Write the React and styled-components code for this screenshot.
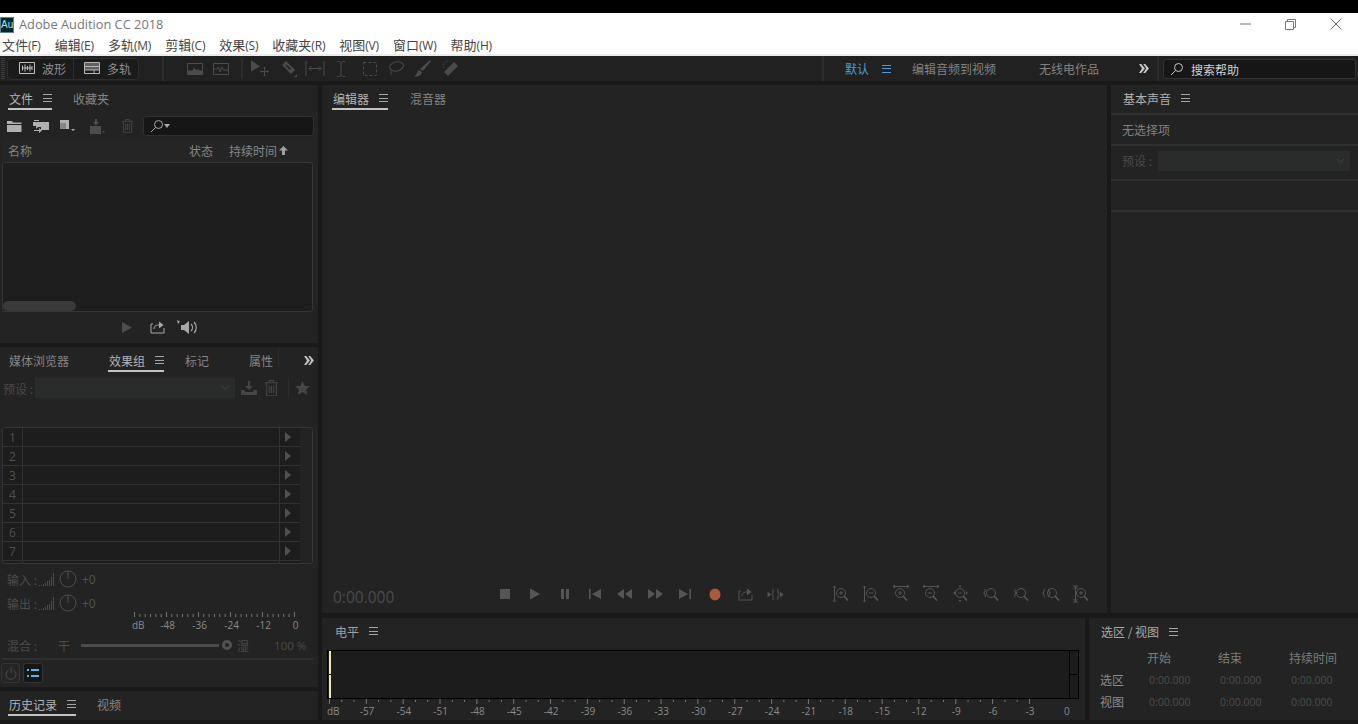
import React from 'react';
import styled, {createGlobalStyle} from 'styled-components';

const GlobalStyle = createGlobalStyle`
  html, body { margin: 0; padding: 0; background: #191919; }
  body {
    width: 1358px;
    height: 724px;
    overflow: hidden;
    font-family: "Noto Sans CJK SC", "Liberation Sans", sans-serif;
    font-size: 12px;
  }
  * { box-sizing: border-box; }
`;

const Shell = styled.div`
  width: 1358px;
  height: 724px;
  display: flex;
  flex-direction: column;
  background: #191919;
  overflow: hidden;
`;
const TopBlack = styled.div`height: 13px; background: #000;`;
const TitleBar = styled.div`
  height: 22px;
  background: #fff;
  display: flex;
  align-items: center;
`;
const AppLogo = styled.div`
  width: 14px;
  height: 16px;
  margin-top: 2px;
  background: #00262f;
  border: 1px solid #5f8290;
  color: #9ce8f5;
  font: 10px/14px "Liberation Sans", sans-serif;
  text-align: center;
`;
const AppTitle = styled.div`
  margin-left: 5px;
  color: #777;
  font: 12.8px "Open Sans", sans-serif;
`;
const WinButtons = styled.div`
  margin-left: auto;
  display: flex;
  color: #777;
`;
const WinButton = styled.div`
  width: 45px;
  height: 22px;
  display: flex;
  align-items: center;
  justify-content: center;
`;
const MenuBar = styled.div`
  height: 21px;
  background: #fff;
  display: flex;
  align-items: center;
  gap: 14px;
  padding-left: 2px;
  border-bottom: 2px solid #ececec;
`;
const MenuItem = styled.span`
  color: #444;
  font-size: 13px;
  line-height: 19px;
  white-space: nowrap;
  font-family: "Noto Sans CJK SC", sans-serif;
  span { font: 12px "Open Sans", sans-serif; letter-spacing: -0.2px; }
`;
const Toolbar = styled.div`
  height: 25px;
  background: #212121;
  display: flex;
  align-items: center;
  color: #4b4b4b;
`;
const Grip = styled.div`
  width: 4px;
  height: 21px;
  margin-left: 1px;
  background: repeating-linear-gradient(#3c3c3c 0 1px, transparent 1px 2px);
`;
const ModeGroup = styled.div`
  margin-left: 2px;
  width: 132px;
  height: 22px;
  display: flex;
  background: #1b1b1b;
  border: 1px solid #2e2e2e;
  border-radius: 4px;
`;
const ModeButton = styled.div`
  flex: 1;
  display: flex;
  align-items: center;
  gap: 7px;
  padding: 0 0 1px 11px;
  color: #8e8e8e;
  white-space: nowrap;
  & + & { border-left: 1px solid #2e2e2e; padding-left: 10px; }
`;
const ToolSep = styled.div`
  flex: none;
  width: ${p => p.$w || 2}px;
  height: ${p => p.$h || 25}px;
  margin-left: ${p => p.$ml || 0}px;
  background: #2c2c2c;
`;
const Tool = styled.svg`
  flex: none;
  margin-left: ${p => p.$ml || 0}px;
  fill: none;
  stroke: currentColor;
  stroke-width: 1;
  color: ${p => p.$c || 'inherit'};
`;
const FlatTool = styled(Tool)`
  stroke: none;
  fill: currentColor;
`;
const Slot = styled.span`
  display: flex;
  flex: none;
  margin-left: ${p => p.$ml || 0}px;
  color: ${p => p.$c || 'inherit'};
`;
const WorkspaceLink = styled.span`
  margin: 0 0 1px ${p => p.$ml}px;
  color: ${p => (p.$on ? '#4a9bd6' : '#818181')};
  white-space: nowrap;
`;
const HelpSearch = styled.div`
  margin-left: 4px;
  width: 193px;
  height: 20px;
  display: flex;
  align-items: center;
  gap: 7px;
  padding-left: 6px;
  background: #161616;
  border: 1px solid #333;
  border-radius: 3px;
  color: #d2d2d2;
  span { padding-top: 2px; }
`;

const Workspace = styled.div`
  margin-top: 4px;
  flex: 1;
  padding-bottom: 4px;
  display: grid;
  grid-template-columns: 318px 1fr;
  gap: 4px;
  min-height: 0;
`;
const Column = styled.div`
  display: flex;
  flex-direction: column;
  min-height: 0;
`;
const Row = styled.div`
  display: flex;
  gap: 4px;
  height: ${p => p.$h}px;
  flex: ${p => (p.$h ? 'none' : 1)};
  margin-top: ${p => p.$mt || 0}px;
`;
const Panel = styled.section`
  background: #232323;
  width: ${p => (p.$w ? p.$w + 'px' : 'auto')};
  height: ${p => (p.$h ? p.$h + 'px' : 'auto')};
  flex: ${p => (p.$w || p.$h ? 'none' : 1)};
  margin-top: ${p => p.$mt || 0}px;
  display: flex;
  flex-direction: column;
  overflow: hidden;
`;
const Tabs = styled.div`
  height: ${p => p.$h || 26}px;
  flex: none;
  display: flex;
  align-items: flex-start;
  padding-left: ${p => p.$pl ?? 8}px;
  position: relative;
`;
const TabItem = styled.div`
  display: flex;
  align-items: center;
  gap: 10px;
  height: 25px;
  padding: 1px 0 0 1px;
  width: ${p => (p.$w ? p.$w + 'px' : 'auto')};
  margin-left: ${p => p.$ml || 0}px;
  color: ${p => p.$c || (p.$on ? '#b4b4b4' : '#858585')};
  white-space: nowrap;
  box-shadow: ${p => (p.$on ? 'inset 0 -2px 0 0 #c4c4c4' : 'none')};
`;
const Burger = styled.span`
  width: 9px;
  height: 8px;
  flex: none;
  margin-left: ${p => p.$ml || 0}px;
  border-top: 1px solid ${p => p.$c || '#a5a5a5'};
  border-bottom: 1px solid ${p => p.$c || '#a5a5a5'};
  background: linear-gradient(${p => p.$c || '#a5a5a5'}, ${p => p.$c || '#a5a5a5'}) center / 100% 1px no-repeat;
`;
const IconBar = styled.div`
  height: 26px;
  flex: none;
  display: flex;
  align-items: center;
  color: #b0b0b0;
  margin-top: ${p => p.$mt || 0}px;
`;
const SearchBox = styled.div`
  width: 171px;
  height: 20px;
  margin-left: 10px;
  background: #161616;
  border: 1px solid #2f2f2f;
  border-radius: 3px;
  display: flex;
  align-items: center;
  padding-left: 6px;
  color: #a8a8a8;
`;
const ListHead = styled.div`
  height: 23px;
  margin: 0 5px 0 2px;
  display: grid;
  grid-template-columns: 181px 40px 1fr;
  align-items: center;
  color: #858585;
  background: #252525;
  span { padding-left: 6px; display: flex; align-items: center; gap: 2px; white-space: nowrap; }
`;
const FileList = styled.div`
  margin: 0 5px 0 2px;
  height: 150px;
  background: #1e1e1e;
  border: 1px solid #363636;
  border-radius: 3px;
  display: flex;
  align-items: flex-end;
`;
const HScroll = styled.div`
  width: 73px;
  height: 10px;
  background: #3a3a3a;
  border-radius: 5px;
`;
const PreviewBar = styled.div`
  flex: 1;
  display: flex;
  align-items: center;
  color: #a8a8a8;
`;
const PanelMore = styled.span`
  position: absolute;
  right: 4px;
  top: 9px;
  color: #c0c0c0;
  display: flex;
`;
const PresetRow = styled.div`
  height: 20px;
  margin-top: ${p => p.$mt}px;
  padding-left: ${p => p.$pl}px;
  display: flex;
  align-items: center;
  flex: none;
  color: #464646;
`;
const PresetLabel = styled.span`
  width: ${p => p.$w}px;
  color: #4a4a4a;
  white-space: nowrap;
`;
const DisabledSelect = styled.div`
  width: ${p => p.$w}px;
  height: 20px;
  background: #2a2b2b;
  display: flex;
  align-items: center;
  justify-content: flex-end;
  padding-right: 5px;
  color: #434343;
`;
const Rack = styled.div`
  margin: 29px 5px 0 2px;
  height: 137px;
  flex: none;
  border: 1px solid #353535;
  border-radius: 3px;
  overflow: hidden;
  padding-right: 12px;
`;
const RackRow = styled.div`
  height: 19px;
  display: grid;
  grid-template-columns: 19px 1fr 21px;
  background: #1d1d1d;
  border-bottom: 1px solid #323232;
  color: #505050;
  span { display: flex; align-items: center; justify-content: center; font: 12px "Open Sans", sans-serif; }
  span + span { border-left: 1px solid #323232; }
`;
const GainRow = styled.div`
  height: 24px;
  flex: none;
  margin-top: ${p => p.$mt || 0}px;
  padding-left: 7px;
  display: flex;
  align-items: center;
  color: #4c4c4c;
  b { font-weight: 400; font: 12px "Open Sans", sans-serif; margin-left: 5px; color: #505050; }
  span { width: 32px; white-space: nowrap; }
`;
const Ruler = styled.div`
  margin: ${p => p.$mt || 0}px 0 0 ${p => p.$ml}px;
  width: ${p => p.$w}px;
  flex: none;
`;
const RulerTicks = styled(Tool)`
  display: block;
  color: #777;
`;
const RulerLabels = styled.div`
  display: flex;
  color: #8a8a8a;
  font: 10px/14px "Open Sans", sans-serif;
  white-space: nowrap;
`;
const RulerLabel = styled.span`
  flex: 0 0 ${p => p.$w}px;
  margin-left: ${p => p.$ml || 0}px;
  text-align: ${p => p.$a || 'center'};
`;
const MixRow = styled.div`
  height: 18px;
  margin-top: 4px;
  flex: none;
  padding-left: 7px;
  display: flex;
  align-items: center;
  color: #4a4a4a;
  white-space: nowrap;
`;
const MixText = styled.span`
  margin-left: ${p => p.$ml}px;
`;
const MixPercent = styled(MixText)`
  font: 11.5px "Open Sans", sans-serif;
`;
const MixTrack = styled.div`
  margin-left: 11px;
  width: 138px;
  height: 3px;
  background: #4a4a4a;
`;
const MixKnob = styled.div`
  margin-left: 3px;
  width: 10px;
  height: 10px;
  border-radius: 50%;
  border: 3px solid #525252;
`;
const RackDivider = styled.div`
  height: 2px;
  margin: 4px 5px 0 2px;
  background: #303030;
  flex: none;
`;
const FooterButtons = styled.div`
  display: flex;
  gap: 3px;
  padding: 3px 0 0 1px;
  flex: none;
`;
const SquareButton = styled.div`
  width: ${p => p.$w}px;
  height: 20px;
  border: 1px solid #343434;
  border-radius: 3px;
  background: ${p => (p.$on ? '#161616' : '#252525')};
  color: ${p => (p.$on ? '#5fb3e3' : '#4a4a4a')};
  display: flex;
  align-items: center;
  justify-content: center;
`;
const EditorBody = styled.div`
  flex: 1;
`;
const TransportBar = styled.div`
  height: 30px;
  margin-bottom: 4px;
  flex: none;
  display: flex;
  align-items: center;
  color: #555;
  padding-left: 11px;
`;
const TimeCode = styled.div`
  width: 157px;
  padding-top: 6px;
  color: #4b4b4b;
  font: 15.5px "Open Sans", sans-serif;
`;
const TransportCell = styled.div`
  width: 30px;
  display: flex;
  justify-content: center;
  align-items: center;
  color: ${p => p.$c || 'inherit'};
  margin-left: ${p => p.$ml || 0}px;
`;
const SoundRow = styled.div`
  height: ${p => p.$h}px;
  flex: none;
  display: flex;
  align-items: center;
  padding: 0 0 ${p => p.$pb || 0}px 11px;
  border-top: 2px solid #2f2f2f;
  color: ${p => p.$c || '#808080'};
`;
const MeterBox = styled.div`
  margin: 6px 0 0 5px;
  width: 752px;
  height: 49px;
  flex: none;
  background: #1c1c1c;
  border: 1px solid #000;
  display: flex;
  justify-content: space-between;
`;
const MeterPeak = styled.div`
  margin-left: 1px;
  width: 2px;
  background: linear-gradient(#000, #000) 0 23px / 100% 1px no-repeat, #efe6b4;
`;
const MeterClip = styled.div`
  width: 9px;
  border-left: 1px solid #000;
  background: linear-gradient(#000, #000) 0 23px / 100% 1px no-repeat;
`;
const RangeTitle = styled.div`
  height: 26px;
  padding: 1px 0 0 12px;
  display: flex;
  align-items: center;
  gap: 10px;
  color: #a8a8a8;
  flex: none;
`;
const RangeGrid = styled.div`
  display: grid;
  grid-template-columns: 47px 71px 71px 1fr;
  grid-template-rows: 21px 22px 22px;
  padding: 3px 0 0 11px;
  align-items: center;
`;
const RangeHead = styled.span`color: #7c7c7c; white-space: nowrap;`;
const RangeLabel = styled.span`color: #8a8a8a;`;
const RangeValue = styled.span`
  color: #4c4c4c;
  font: 10.5px "Open Sans", sans-serif;
  padding: 1px 0 0 2px;
`;

const FolderIcon = () => (
  <FlatTool width="15" height="12" viewBox="0 0 15 12">
    <path d="M0 1h5l1 1.5h8.5V4H0zM0 5h14.5v7H0z" />
  </FlatTool>
);
const TrashIcon = ({size = 12, ml}) => (
  <Tool width={size} height={size * 1.25} viewBox="0 0 12 15" $ml={ml}>
    <path d="M0 2.5h12M4 2.5V.5h4v2M1.5 2.5v12h9v-12M4 5v7M6 5v7M8 5v7" />
  </Tool>
);
const SearchGlass = ({color}) => (
  <Tool width="14" height="14" viewBox="0 0 14 14" $c={color} strokeWidth="1.6">
    <circle cx="8.5" cy="5.5" r="4" />
    <path d="M5.5 8.5L1 13" />
  </Tool>
);
const Chevron = () => (
  <Tool width="9" height="6" viewBox="0 0 9 6" strokeWidth="1.4"><path d="M1 1l3.5 3.5L8 1" /></Tool>
);
const DoubleArrow = () => (
  <FlatTool width="10" height="9" viewBox="0 0 10 9">
    <path d="M0 0h2.200L6 4.500 2.200 9H0l3-4.500zM4.200 0h2L10 4.500 6.200 9h-2l3-4.500z" />
  </FlatTool>
);
const Knob = () => (
  <Tool width="18" height="18" viewBox="0 0 18 18" $ml={5} $c="#4e4e4e" strokeWidth="2">
    <circle cx="9" cy="9" r="8" /><path d="M9 1v8" />
  </Tool>
);
const LevelBars = () => (
  <Tool width="15" height="15" viewBox="0 0 15 15" $c="#4a4a4a">
    <path d="M.5 14v-1M2.5 14v-1M4.5 14v-2M6.5 14v-3M8.500 14v-5M10.500 14V8M12.500 14V5M14.500 14V1" />
  </Tool>
);

// transport glyphs, all drawn on a 16x14 box
const transportGlyphs = [
  <rect key="s" x="3" y="2" width="10" height="10" />,
  <path key="p" d="M3 1.500l10 5.500-10 5.500z" />,
  <path key="pa" d="M4 2h3v10H4zM9 2h3v10H9z" />,
  <path key="pr" d="M2 2h1.600v10H2zM14 2v10L5 7z" />,
  <path key="rw" d="M0 7l7-5v10zM8 7l7-5v10z" />,
  <path key="ff" d="M16 7L9 2v10zM8 7L1 2v10z" />,
  <path key="nx" d="M14 2h-1.600v10H14zM2 2v10l9-5z" />,
];
const ExportGlyph = () => (
  <Tool width="15" height="13" viewBox="0 0 15 13" strokeWidth="1.8">
    <path d="M3 3H1v9h13V7" />
    <path d="M4 8c0-3 2-4 6-4" />
    <path d="M9 .5L13.500 4 9 7.500z" fill="currentColor" stroke="none" />
  </Tool>
);
const SkipGlyph = () => (
  <Tool width="17" height="13" viewBox="0 0 17 13" strokeWidth="1.200">
    <path d="M7 1c-1 0-1 1-1 2v2L5 6.500l1 1v2.500c0 1 0 2 1 2M10 1c1 0 1 1 1 2v2l1 1.500-1 1v2.500c0 1 0 2-1 2" />
    <path d="M4 6.500L0.500 3.500v6zM16.500 6.500L13 3.500v6z" fill="currentColor" stroke="none" />
  </Tool>
);
const ZoomGlyph = ({children, mark = 'plus', ox = 8}) => (
  <Tool width="20" height="20" viewBox="0 0 20 20">
    {children}
    <circle cx={ox + 3} cy="9" r="4.500" />
    <path d={`M${ox + 6} 12l4 4.500`} strokeWidth="1.800" />
    {mark === 'minus' && <path d={`M${ox + 1} 9h4`} />}
    {mark === 'plus' && <path d={`M${ox + 1} 9h4M${ox + 3} 7v4`} />}
  </Tool>
);
const zoomTools = [
  <ZoomGlyph key="0" ox={6}><path d="M2.500 2v16M1 3.500L2.500 2 4 3.500M1 16.500L2.500 18 4 16.500" /></ZoomGlyph>,
  <ZoomGlyph key="1" ox={6} mark="minus"><path d="M2.500 2v16M1 3.500L2.500 2 4 3.500M1 16.500L2.500 18 4 16.500" /></ZoomGlyph>,
  <ZoomGlyph key="2" ox={5}><path d="M1 2.500h16M3 1L1 2.500 3 4M15 1l2 1.500L15 4" /></ZoomGlyph>,
  <ZoomGlyph key="3" ox={5} mark="minus"><path d="M1 2.500h16M3 1L1 2.500 3 4M15 1l2 1.500L15 4" /></ZoomGlyph>,
  <ZoomGlyph key="4" ox={5} mark="minus"><path d="M8 1L6.500 3h3zM8 18l-1.500-2h3zM1 9l2-1.500v3zM16 9l-2-1.500v3z" fill="currentColor" stroke="none" /></ZoomGlyph>,
  <ZoomGlyph key="5" ox={6} mark="none"><path d="M4 5C3 5 3 6 3 7v1L1.500 9 3 10v1c0 1 0 2 1 2" /></ZoomGlyph>,
  <ZoomGlyph key="6" ox={6} mark="none"><path d="M2 5c1 0 1 1 1 2v1l1.500 1L3 10v1c0 1 0 2-1 2" /></ZoomGlyph>,
  <ZoomGlyph key="7" ox={7} mark="none"><path d="M3 5C2 5 2 6 2 7v1L.500 9 2 10v1c0 1 0 2 1 2M6 5c1 0 1 1 1 2v1l1.500 1L7 10v1c0 1 0 2-1 2" /></ZoomGlyph>,
  <ZoomGlyph key="8" ox={6}><path d="M1 2h5M1 18h5M3.500 2v16M1.500 5l2-2 2 2M1.500 15l2 2 2-2" /></ZoomGlyph>,
];

const menus = [['文件', 'F'], ['编辑', 'E'], ['多轨', 'M'], ['剪辑', 'C'], ['效果', 'S'], ['收藏夹', 'R'], ['视图', 'V'], ['窗口', 'W'], ['帮助', 'H']];
const levelLabels = ['-57', '-54', '-51', '-48', '-45', '-42', '-39', '-36', '-33', '-30', '-27', '-24', '-21', '-18', '-15', '-12', '-9', '-6', '-3', '0'];

const rackTicks = Array.from({length: 31}, (_, i) => i);
const levelTicks = Array.from({length: 58}, (_, i) => i);

const App = () => (
  <Shell>
    <GlobalStyle />
    <TopBlack />
    <TitleBar>
      <AppLogo>Au</AppLogo>
      <AppTitle>Adobe Audition CC 2018</AppTitle>
      <WinButtons>
        <WinButton><Tool width="11" height="2" viewBox="0 0 11 2"><path d="M0 1h11" /></Tool></WinButton>
        <WinButton><Tool width="11" height="11" viewBox="0 0 11 11"><path d="M.5 2.500h8v8h-8zM2.500 2.500v-2h8v8h-2" /></Tool></WinButton>
        <WinButton><Tool width="12" height="12" viewBox="0 0 12 12"><path d="M.5.5l11 11M11.500.5l-11 11" /></Tool></WinButton>
      </WinButtons>
    </TitleBar>
    <MenuBar>
      {menus.map(([name, key]) => (
        <MenuItem key={key}>{name}<span>({key})</span></MenuItem>
      ))}
    </MenuBar>

    <Toolbar>
      <Grip />
      <ModeGroup>
        <ModeButton>
          <Tool width="16" height="12" viewBox="0 0 16 12" $c="#c0c0c0">
            <path d="M.5.500h15v11H.5zM3 6h10M3.500 3.500v5M6 2.500v7M8.500 4v4M11 2.500v7M13 4v4" />
          </Tool>
          波形
        </ModeButton>
        <ModeButton>
          <Tool width="16" height="12" viewBox="0 0 16 12" $c="#b5b5b5">
            <path d="M.5.500h15v11H.5zM.5 4.500h15M.5 8h15M10 8v3.500" />
            <path d="M1 1h14v3.500H1zM1 5h14v3H1z" fill="currentColor" fillOpacity=".45" stroke="none" />
          </Tool>
          多轨
        </ModeButton>
      </ModeGroup>
      <ToolSep $ml={23} />
      <Tool width="16" height="12" viewBox="0 0 16 12" $ml={23}>
        <path d="M.5.500h15v11H.5z" />
        <path d="M1 11V8l2-1 1 1 2-1 1-3 1 2 2 1 1-1 1 1 3 1v3z" fill="currentColor" stroke="none" />
      </Tool>
      <Tool width="16" height="12" viewBox="0 0 16 12" $ml={10}>
        <path d="M.5.500h15v11H.5zM1 6h3l1.500-2L7 9l2-5 1.500 3H15" />
      </Tool>
      <ToolSep $ml={12} $h={21} />
      <Tool width="19" height="17" viewBox="0 0 19 17" $ml={8}>
        <path d="M0 0l9 6.500-9 5z" fill="currentColor" stroke="none" />
        <path d="M13.500 7v9M9.500 11.500h8M12.500 8l1-1 1 1M12.500 15l1 1 1-1M10.500 10.500l-1 1 1 1M16.500 10.500l1 1-1 1" />
      </Tool>
      <Tool width="17" height="16" viewBox="0 0 17 16" $ml={11}>
        <path d="M5 0l9 9-4 4-9-9z" fill="currentColor" stroke="none" />
        <path d="M5 4l4.500 4.500" stroke="#212121" strokeWidth="1.600" />
        <path d="M16 13v3h-3z" fill="currentColor" stroke="none" />
      </Tool>
      <Tool width="20" height="15" viewBox="0 0 20 15" $ml={7} strokeWidth="1.400">
        <path d="M1 0v15M19 0v15M4 7.500h12M6.500 5L4 7.500 6.500 10M13.500 5L16 7.500 13.500 10" />
      </Tool>
      <Tool width="10" height="16" viewBox="0 0 10 16" $ml={11}>
        <path d="M1 .5c2 0 4 0 4 2v11c0 2-2 2-4 2M9 .5c-2 0-4 0-4 2M9 15.500c-2 0-4 0-4-2" />
      </Tool>
      <Tool width="14" height="14" viewBox="0 0 14 14" $ml={17} strokeDasharray="3 2">
        <path d="M.5.500h13v13H.5z" />
      </Tool>
      <Tool width="16" height="15" viewBox="0 0 16 15" $ml={11} strokeWidth="1.200">
        <ellipse cx="8.500" cy="5.500" rx="7" ry="4.500" transform="rotate(-12 8.500 5.500)" />
        <path d="M4 9c-2 1-1 3 0 5" />
      </Tool>
      <FlatTool width="17" height="17" viewBox="0 0 17 17" $ml={10}>
        <path d="M16 0l1 1-8 10-3-2zM5 10l3 2.500C7 16 3 17 0 16.500 3 15 3 11 5 10z" />
      </FlatTool>
      <Tool width="18" height="17" viewBox="0 0 18 17" $ml={10}>
        <path d="M13 2l4 4-10 10-4-4z" fill="currentColor" stroke="none" />
        <path d="M3 8C1 5 3 1 7 1" strokeDasharray="1.500 1.500" />
      </Tool>

      <ToolSep $ml={363} />
      <WorkspaceLink $ml={21} $on>默认</WorkspaceLink>
      <Burger $ml={13} $c="#4a9bd6" />
      <WorkspaceLink $ml={21}>编辑音频到视频</WorkspaceLink>
      <WorkspaceLink $ml={43}>无线电作品</WorkspaceLink>
      <Slot $ml={40} $c="#c8c8c8"><DoubleArrow /></Slot>
      <ToolSep $ml={8} />
      <HelpSearch><SearchGlass color="#c8c8c8" /><span>搜索帮助</span></HelpSearch>
    </Toolbar>

    <Workspace>
      <Column>
        <Panel $h={258}>
          <Tabs>
            <TabItem $on>文件<Burger /></TabItem>
            <TabItem $ml={20}>收藏夹</TabItem>
          </Tabs>
          <IconBar $mt={2}>
            <Slot $ml={7}><FolderIcon /></Slot>
            <FlatTool width="16" height="13" viewBox="0 0 16 13" $ml={11}>
              <path d="M1 0h5v1H1zM0 2h16v8H8V7H5L3 9V6H0z" />
              <path d="M1 10h5V8l3 2.500L6 13v-2H1z" />
            </FlatTool>
            <FlatTool width="15" height="12" viewBox="0 0 15 12" $ml={11}>
              <path d="M0 0h9v9H6V3H0zM11 9h4l-2 2z" />
              <path d="M0 3h6v6H0z" fillOpacity=".7" />
            </FlatTool>
            <FlatTool width="16" height="15" viewBox="0 0 16 15" $ml={14} $c="#4d4d4d">
              <path d="M1 7h11v8H1zM6 0h2v3h2L7 6.500 4 3h2zM13 12h3l-1.500 2z" />
            </FlatTool>
            <Slot $c="#454545"><TrashIcon size={11} ml={17} /></Slot>
            <SearchBox>
              <SearchGlass />
              <FlatTool width="6" height="4" viewBox="0 0 6 4"><path d="M0 0h6L3 4z" /></FlatTool>
            </SearchBox>
          </IconBar>
          <ListHead>
            <span>名称</span>
            <span>状态</span>
            <span>持续时间
              <FlatTool width="9" height="9" viewBox="0 0 9 9" $c="#a0a0a0"><path d="M4.500 0L9 4.500H6V9H3V4.500H0z" /></FlatTool>
            </span>
          </ListHead>
          <FileList><HScroll /></FileList>
          <PreviewBar>
            <FlatTool width="10" height="11" viewBox="0 0 10 11" $ml={122} $c="#4d4d4d"><path d="M0 0l10 5.500L0 11z" /></FlatTool>
            <Slot $ml={18}><ExportGlyph /></Slot>
            <FlatTool width="21" height="15" viewBox="0 0 21 15" $ml={12}>
              <path d="M0 0l3 1.500L1 4zM4 5h3l5-4v13l-5-4H4z" />
              <path d="M14 4c2 2 2 5 0 7M17 2c3 3 3 8 0 11" stroke="currentColor" strokeWidth="1.200" fill="none" />
            </FlatTool>
          </PreviewBar>
        </Panel>

        <Panel $h={340} $mt={4}>
          <Tabs>
            <TabItem $w={62}>媒体浏览器</TabItem>
            <TabItem $on $ml={38}>效果组<Burger /></TabItem>
            <TabItem $ml={20}>标记</TabItem>
            <TabItem $ml={39}>属性</TabItem>
            <ToolSep $w={1} $h={20} $ml={5} />
            <PanelMore><DoubleArrow /></PanelMore>
          </Tabs>
          <PresetRow $mt={5} $pl={3}>
            <PresetLabel $w={32}>预设 :</PresetLabel>
            <DisabledSelect $w={200}><Chevron /></DisabledSelect>
            <FlatTool width="16" height="14" viewBox="0 0 16 14" $ml={6}>
              <path d="M7 0h2v5h3L8 9 4 5h3zM0 9h3l1 2h8l1-2h3v5H0z" />
            </FlatTool>
            <TrashIcon size={13} ml={8} />
            <ToolSep $w={1} $h={20} $ml={10} />
            <FlatTool width="15" height="14" viewBox="0 0 15 14" $ml={6}>
              <path d="M7.500 0l2.300 5H15l-4 3.500L12.300 14 7.500 11 2.700 14 4 8.500 0 5h5.200z" />
            </FlatTool>
          </PresetRow>
          <Rack>
            {[1, 2, 3, 4, 5, 6, 7, ''].map((n, i) => (
              <RackRow key={i}>
                <span>{n}</span>
                <span />
                <span>
                  {n !== '' && (
                    <FlatTool width="6" height="10" viewBox="0 0 6 10" $ml={-4}><path d="M0 0l6 5-6 5z" /></FlatTool>
                  )}
                </span>
              </RackRow>
            ))}
          </Rack>
          <GainRow $mt={3}><span>输入 :</span><LevelBars /><Knob /><b>+0</b></GainRow>
          <GainRow><span>输出 :</span><LevelBars /><Knob /><b>+0</b></GainRow>
          <Ruler $ml={132} $w={180} $mt={-3}>
            <RulerTicks width="180" height="6" viewBox="0 0 180 6">
              {rackTicks.map(i => (
                <path key={i} d={`M${2.5 + i * 5.33} ${i % 6 === 0 ? 0 : 2}V5`} />
              ))}
            </RulerTicks>
            <RulerLabels>
              <RulerLabel $w={12} $a="left">dB</RulerLabel>
              {['-48', '-36', '-24', '-12', '0'].map((t, i) => (
                <RulerLabel key={t} $w={32} $ml={i === 0 ? 7 : 0}>{t}</RulerLabel>
              ))}
            </RulerLabels>
          </Ruler>
          <MixRow>
            混合 :
            <MixText $ml={21}>干</MixText>
            <MixTrack />
            <MixKnob />
            <MixText $ml={5}>湿</MixText>
            <MixPercent $ml={25}>100 %</MixPercent>
          </MixRow>
          <RackDivider />
          <FooterButtons>
            <SquareButton $w={19}>
              <Tool width="12" height="13" viewBox="0 0 12 13"><path d="M3.500 3a5 5 0 1 0 5 0M6 0v6" /></Tool>
            </SquareButton>
            <SquareButton $w={20} $on>
              <FlatTool width="12" height="10" viewBox="0 0 12 10">
                <path d="M0 1h2v2H0zM4 1h8v2H4zM0 7h2v2H0zM4 7h8v2H4z" />
              </FlatTool>
            </SquareButton>
          </FooterButtons>
        </Panel>

        <Panel $h={29} $mt={4}>
          <Tabs>
            <TabItem $on>历史记录<Burger /></TabItem>
            <TabItem $ml={20}>视频</TabItem>
          </Tabs>
        </Panel>
      </Column>

      <Column>
        <Row $h={528}>
          <Panel $w={785}>
            <Tabs $pl={10}>
              <TabItem $on>编辑器<Burger /></TabItem>
              <TabItem $ml={21}>混音器</TabItem>
            </Tabs>
            <EditorBody />
            <TransportBar>
              <TimeCode>0:00.000</TimeCode>
              {transportGlyphs.map(g => (
                <TransportCell key={g.key}>
                  <FlatTool width="16" height="14" viewBox="0 0 16 14">{g}</FlatTool>
                </TransportCell>
              ))}
              <TransportCell $c="#a85a3a">
                <FlatTool width="12" height="13" viewBox="0 0 12 13"><ellipse cx="6" cy="6.500" rx="5.500" ry="6" /></FlatTool>
              </TransportCell>
              <TransportCell><ExportGlyph /></TransportCell>
              <TransportCell><SkipGlyph /></TransportCell>
              {zoomTools.map((z, i) => (
                <TransportCell key={i} $ml={i === 0 ? 37 : 0}>{z}</TransportCell>
              ))}
            </TransportBar>
          </Panel>
          <Panel>
            <Tabs $pl={11} $h={28}>
              <TabItem $c="#b0b0b0">基本声音<Burger /></TabItem>
            </Tabs>
            <SoundRow $h={31}>无选择项</SoundRow>
            <SoundRow $h={35} $pb={4} $c="#4a4a4a">
              <PresetLabel $w={36}>预设 :</PresetLabel>
              <DisabledSelect $w={192}><Chevron /></DisabledSelect>
            </SoundRow>
            <SoundRow $h={31} />
            <SoundRow $h={2} />
          </Panel>
        </Row>
        <Row $mt={5}>
          <Panel $w={763}>
            <Tabs $pl={12}>
              <TabItem $c="#a0a0a0">电平<Burger /></TabItem>
            </Tabs>
            <MeterBox>
              <MeterPeak />
              <MeterClip />
            </MeterBox>
            <Ruler $ml={5} $w={752}>
              <RulerTicks width="752" height="5" viewBox="0 0 752 5">
                {levelTicks.map(i => (
                  <path key={i} d={`M${2.5 + i * 12.28} ${i % 3 === 0 ? 0 : 1}V${i % 3 === 0 ? 5 : 3}`} />
                ))}
              </RulerTicks>
              <RulerLabels>
                <RulerLabel $w={21.6} $a="left">dB</RulerLabel>
                {levelLabels.map(t => <RulerLabel key={t} $w={36.84}>{t}</RulerLabel>)}
              </RulerLabels>
            </Ruler>
          </Panel>
          <Panel>
            <RangeTitle>选区 / 视图<Burger /></RangeTitle>
            <RangeGrid>
              <span />
              <RangeHead>开始</RangeHead>
              <RangeHead>结束</RangeHead>
              <RangeHead>持续时间</RangeHead>
              <RangeLabel>选区</RangeLabel>
              <RangeValue>0:00.000</RangeValue>
              <RangeValue>0:00.000</RangeValue>
              <RangeValue>0:00.000</RangeValue>
              <RangeLabel>视图</RangeLabel>
              <RangeValue>0:00.000</RangeValue>
              <RangeValue>0:00.000</RangeValue>
              <RangeValue>0:00.000</RangeValue>
            </RangeGrid>
          </Panel>
        </Row>
      </Column>
    </Workspace>
  </Shell>
);

export default App;
